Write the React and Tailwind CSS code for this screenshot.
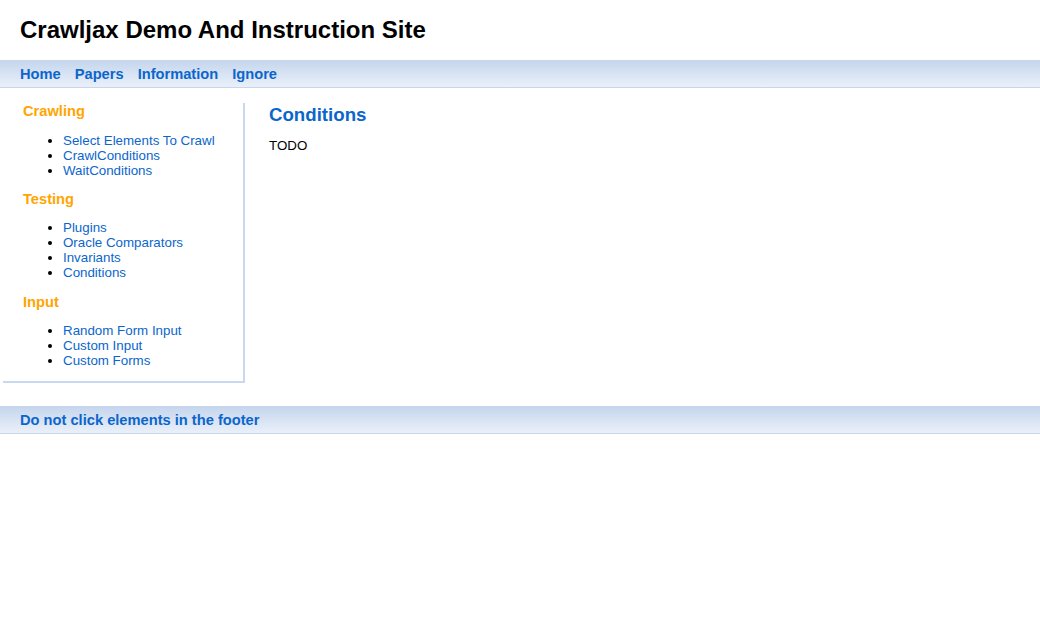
import React from 'react';

const sections = [
  { title: 'Crawling', links: ['Select Elements To Crawl', 'CrawlConditions', 'WaitConditions'], gap: '', listGap: 'mt-[13px]' },
  { title: 'Testing', links: ['Plugins', 'Oracle Comparators', 'Invariants', 'Conditions'], gap: 'mt-[13px]', listGap: 'mt-3' },
  { title: 'Input', links: ['Random Form Input', 'Custom Input', 'Custom Forms'], gap: 'mt-[14px]', listGap: 'mt-3' },
];

const App = () => {
  return (
    <div className="min-h-screen bg-white font-['Liberation_Sans',Arial,sans-serif] text-black">
      {/* Header */}
      <header className="h-[60px] px-5 flex items-center">
        <h1 className="text-[24px] font-bold leading-none">Crawljax Demo And Instruction Site</h1>
      </header>

      {/* Nav */}
      <nav className="h-[28px] px-5 flex items-center gap-3.5 bg-gradient-to-b from-[#c5d5ed] to-[#eaf0f9] border-b border-[#c6d6ee]">
        {['Home', 'Papers', 'Information', 'Ignore'].map((item) => (
          <a key={item} href="#" className="text-[14.67px] font-bold text-[#0b66cc]">
            {item}
          </a>
        ))}
      </nav>

      {/* Main */}
      <div className="flex items-start pt-[15px]">
        <aside className="ml-[3px] w-[242px] pl-5 pb-[13px] border-r-2 border-b-2 border-[#c8d8ef]">
          {sections.map((s) => (
            <div key={s.title} className={s.gap}>
              <h3 className="text-[14.67px] font-bold text-[#ffa500] leading-[17px]">{s.title}</h3>
              <ul className={`${s.listGap} pl-10 list-disc text-[13.33px] leading-[15px]`}>
                {s.links.map((l) => (
                  <li key={l}>
                    <a href="#" className="text-[#0b66cc]">{l}</a>
                  </li>
                ))}
              </ul>
            </div>
          ))}
        </aside>

        <main className="ml-6 pt-px">
          <h2 className="text-[18.67px] font-bold text-[#0b66cc] leading-[22px]">Conditions</h2>
          <p className="mt-3 text-[13.33px] leading-[15px]">TODO</p>
        </main>
      </div>

      {/* Footer */}
      <footer className="mt-[23px] h-[28px] px-5 flex items-center bg-gradient-to-b from-[#c5d5ed] to-[#eaf0f9] border-b border-[#c6d6ee]">
        <span className="text-[14.67px] font-bold text-[#0b66cc]">Do not click elements in the footer</span>
      </footer>
    </div>
  );
};

export default App;
